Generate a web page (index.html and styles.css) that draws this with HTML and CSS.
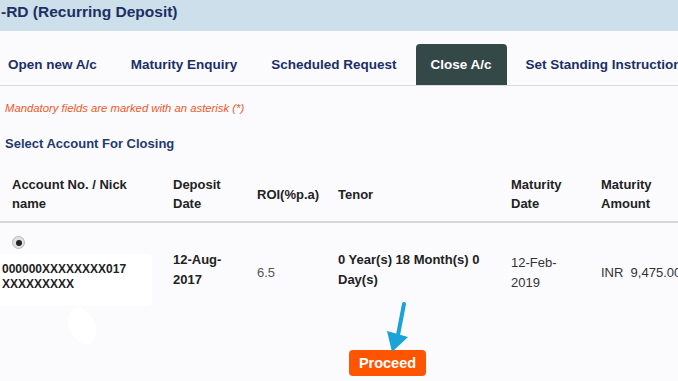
FILE: index.html
```html
<!DOCTYPE html>
<html lang="en">
<head>
    <meta charset="UTF-8">
    <meta name="viewport" content="width=device-width, initial-scale=1.0">
    <title>RD (Recurring Deposit)</title>
    <link rel="stylesheet" href="styles.css">
</head>
<body>
    <div class="page-title">-RD (Recurring Deposit)</div>

    <ul class="tabs">
        <li class="tab">Open new A/c</li>
        <li class="tab">Maturity Enquiry</li>
        <li class="tab">Scheduled Request</li>
        <li class="tab active">Close A/c</li>
        <li class="tab">Set Standing Instructions</li>
    </ul>

    <div class="content">
        <p class="mandatory">Mandatory fields are marked with an asterisk (*)</p>
        <h2 class="section-title">Select Account For Closing</h2>

        <div class="acct-table">
            <div class="th">Account No. / Nick name</div>
            <div class="th">Deposit Date</div>
            <div class="th mid">ROI(%p.a)</div>
            <div class="th mid">Tenor</div>
            <div class="th">Maturity Date</div>
            <div class="th">Maturity Amount</div>

            <div class="td first">
                <span class="radio"><span class="dot"></span></span>
                <div class="acct-box">000000XXXXXXXX017<br>XXXXXXXXX</div>
            </div>
            <div class="td bold top">12-Aug-<br>2017</div>
            <div class="td light single">6.5</div>
            <div class="td bold top">0 Year(s) 18 Month(s) 0 Day(s)</div>
            <div class="td plain top2">12-Feb-<br>2019</div>
            <div class="td plain single amount">INR&nbsp;&nbsp;9,475.00</div>
        </div>

        <div class="actions">
            <button class="proceed">Proceed</button>
        </div>

        <span class="blob"></span>
        <svg class="pointer" width="30" height="52" viewBox="0 0 30 52">
            <line x1="24" y1="3" x2="18" y2="34" stroke="#1aa3d8" stroke-width="4" stroke-linecap="round"/>
            <polygon points="7,30 28,36 12,51" fill="#1aa3d8"/>
        </svg>
    </div>
</body>
</html>
```

FILE: styles.css
```css
body {
    margin: 0;
    background: #fbfbfe;
    font-family: 'Liberation Sans', Arial, sans-serif;
    color: #222;
    overflow: hidden;
}

.page-title {
    height: 31px;
    background: #cddfea;
    color: #1c2f63;
    font-size: 15.5px;
    font-weight: bold;
    line-height: 24px;
    padding-left: 1px;
    box-sizing: border-box;
}

.tabs {
    display: flex;
    list-style: none;
    margin: 0;
    padding: 13px 0 0 0;
    border-bottom: 1px solid #dcdcdc;
    white-space: nowrap;
}

.tab {
    padding: 0 15px;
    margin-right: 4px;
    height: 41px;
    line-height: 41px;
    font-size: 13.5px;
    font-weight: bold;
    color: #1a2f66;
    border-radius: 4px 4px 0 0;
}

.tab:first-child {
    margin-left: -7px;
}

.tab.active {
    background: #344848;
    color: #fff;
}

.content {
    position: relative;
    padding-top: 1px;
}

.mandatory {
    margin: 14px 0 0 5px;
    font-size: 11.3px;
    line-height: 14px;
    font-style: italic;
    color: #f0581e;
}

.section-title {
    margin: 21px 0 0 5px;
    font-size: 13px;
    line-height: 16px;
    color: #1e3a6e;
}

.acct-table {
    display: grid;
    grid-template-columns: 161px 84px 81px 173px 90px 120px;
    margin-top: 14px;
}

.th {
    padding: 9px 6px 8px 12px;
    font-size: 13px;
    line-height: 19px;
    font-weight: bold;
    color: #222;
    border-bottom: 2px solid #d6d6d6;
}

.th.mid {
    display: flex;
    align-items: center;
}

.td {
    padding-left: 12px;
    font-size: 13px;
    line-height: 20px;
}

.td.first {
    padding-left: 0;
    padding-top: 13px;
}

.radio {
    display: block;
    width: 13px;
    height: 13px;
    margin-left: 12px;
    border-radius: 50%;
    background: #e0e0e0;
    border: 1px solid #b8b8b8;
    box-sizing: border-box;
    position: relative;
}

.radio .dot {
    position: absolute;
    left: 2.5px;
    top: 2.5px;
    width: 6px;
    height: 6px;
    border-radius: 50%;
    background: #222;
}

.acct-box {
    margin-top: 5px;
    width: 152px;
    height: 52px;
    padding: 8px 0 0 2px;
    box-sizing: border-box;
    background: #fff;
    border-radius: 0 4px 4px 0;
    font-size: 12px;
    line-height: 15px;
    font-weight: bold;
    color: #222;
}

.td.bold {
    font-weight: bold;
    color: #222;
}

.td.top {
    padding-top: 27px;
}

.td.top2 {
    padding-top: 30px;
}

.td.single {
    padding-top: 40px;
}

.td.light {
    color: #555;
}

.td.plain {
    color: #333;
}

.td.amount {
    white-space: nowrap;
}

.actions {
    padding: 44px 0 0 349px;
}

.proceed {
    width: 77px;
    height: 26px;
    border: none;
    border-radius: 4px;
    background: #ff5500;
    color: #fff;
    font-family: 'Liberation Sans', Arial, sans-serif;
    font-size: 14.5px;
    font-weight: bold;
    padding: 0;
}

.blob {
    position: absolute;
    left: 69px;
    top: 221px;
    width: 26px;
    height: 38px;
    border-radius: 50%;
    background: #fff;
    transform: rotate(-25deg);
}

.pointer {
    position: absolute;
    left: 380px;
    top: 215px;
}
```
